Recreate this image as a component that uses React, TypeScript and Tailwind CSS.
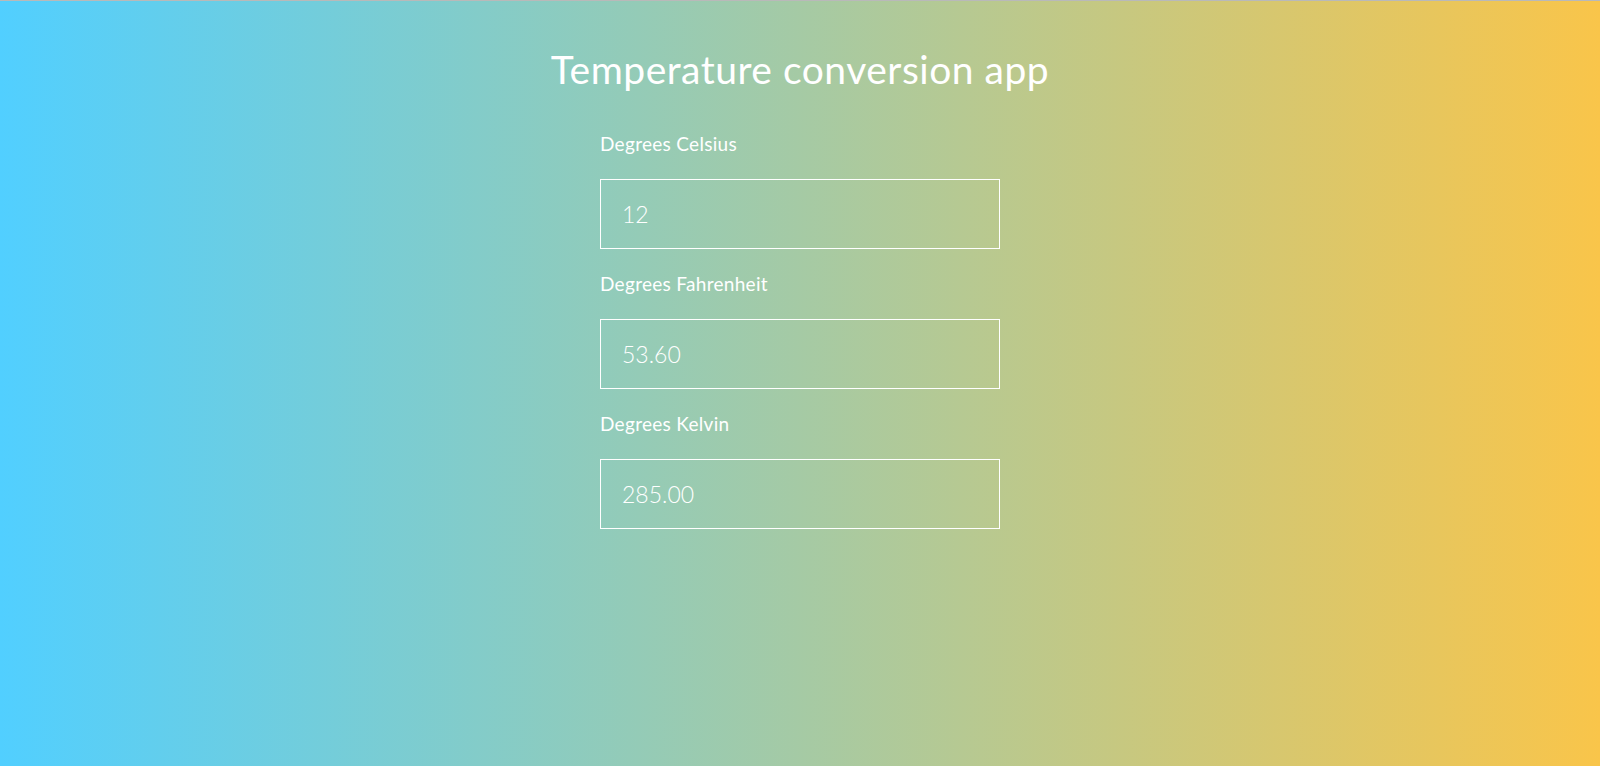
import { useState } from "react";

const toF = (c: number) => (c * 9) / 5 + 32;
const toK = (c: number) => c + 273;

const Field = ({
  label,
  value,
  onChange,
  autoFocus,
}: {
  label: string;
  value: string;
  onChange: (v: string) => void;
  autoFocus?: boolean;
}) => (
  <label className="flex flex-col">
    <span className="text-[19px] leading-[22px] font-normal tracking-[0.3px] text-white mb-[24px]">
      {label}
    </span>
    <input
      autoFocus={autoFocus}
      value={value}
      onChange={(e) => onChange(e.target.value)}
      className="h-[70px] w-full border border-white bg-transparent px-[21px] text-[23px] font-light text-white outline-none caret-white"
    />
  </label>
);

export default function App() {
  const [celsius, setCelsius] = useState("12");
  const c = parseFloat(celsius) || 0;

  return (
    <main
      className="min-h-screen w-full border-t border-[#b9b9b9] bg-[linear-gradient(to_right,#51cfff,#f9c54a)] flex flex-col items-center pt-[45px]"
      style={{ fontFamily: "Lato, 'Open Sans', sans-serif" }}
    >
      <h1 className="text-[39px] leading-[46px] font-normal tracking-[0.5px] text-white">
        Temperature conversion app
      </h1>
      <form
        className="w-[400px] mt-[41px] flex flex-col gap-[24px]"
        onSubmit={(e) => e.preventDefault()}
      >
        <Field
          label="Degrees Celsius"
          value={celsius}
          onChange={setCelsius}
          autoFocus
        />
        <Field
          label="Degrees Fahrenheit"
          value={toF(c).toFixed(2)}
          onChange={(v) => setCelsius((((parseFloat(v) || 0) - 32) * 5 / 9).toString())}
        />
        <Field
          label="Degrees Kelvin"
          value={toK(c).toFixed(2)}
          onChange={(v) => setCelsius(((parseFloat(v) || 0) - 273).toString())}
        />
      </form>
    </main>
  );
}
